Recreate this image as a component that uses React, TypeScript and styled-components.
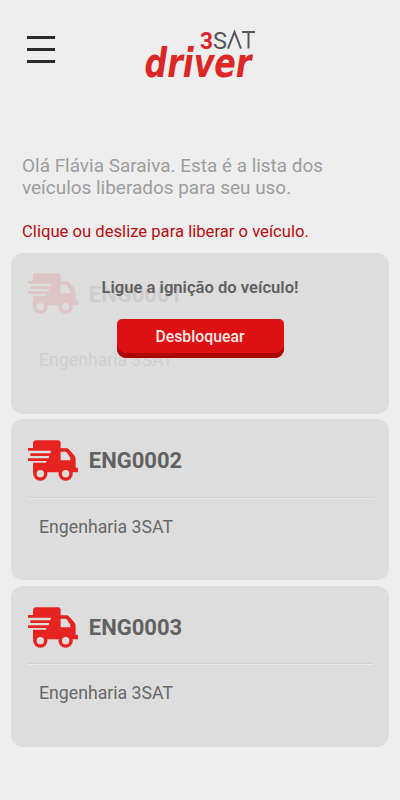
import React from "react";
import styled, { createGlobalStyle } from "styled-components";

const GlobalStyle = createGlobalStyle`
  * { box-sizing: border-box; }
  body { margin: 0; background: #eeeeee; font-family: Roboto, "Liberation Sans", sans-serif; }
`;

const Screen = styled.main`
  display: flex;
  flex-direction: column;
  height: 800px;
  background: #eeeeee;
  overflow: hidden;
`;

const Header = styled.header`
  display: grid;
  grid-template-columns: 144px 114px 1fr;
  align-items: start;
  height: 155px;
  padding-top: 27px;
`;

const MenuButton = styled.button`
  display: flex;
  flex-direction: column;
  gap: 9px;
  width: 28px;
  margin: 9px 0 0 27px;
  padding: 0;
  border: 0;
  background: none;
`;

const MenuLine = styled.span`
  height: 3px;
  width: 28px;
  background: #2b292a;
`;

const LogoSvg = styled.svg`
  display: block;
  overflow: visible;
`;

const Greeting = styled.p`
  margin: 0 0 0 22px;
  font-size: 18.95px;
  line-height: 22px;
  color: #9d9d9d;
  white-space: nowrap;
`;

const Hint = styled.p`
  margin: 22px 0 0 22px;
  font-size: 16.65px;
  line-height: 22px;
  color: #b50d10;
`;

const CardList = styled.section`
  display: flex;
  flex-direction: column;
  gap: 5.7px;
  margin: 9.6px 11px 0;
`;

const Card = styled.article`
  position: relative;
  height: 161px;
  padding: 21px 16.5px 0;
  border-radius: 12px;
  background: #dddddd;
  overflow: hidden;
`;

const CardBody = styled.div<{ $faded: boolean }>`
  opacity: ${(p) => (p.$faded ? 0.12 : 1)};
`;

const CardHead = styled.div`
  display: flex;
  align-items: center;
  height: 41px;
`;

const Plate = styled.h2`
  margin: 1px 0 0 10px;
  font-size: 22px;
  line-height: 26px;
  font-weight: 700;
  color: #616161;
`;

const Divider = styled.hr<{ $hidden: boolean }>`
  height: 2px;
  margin: 15.5px 0 0;
  border: 0;
  border-top: 1px solid #d2d2d2;
  border-bottom: 1px solid #eaeaea;
  visibility: ${(p) => (p.$hidden ? "hidden" : "visible")};
`;

const Company = styled.p`
  margin: 17px 0 0 11.5px;
  font-size: 17.7px;
  line-height: 22px;
  color: #686868;
`;

const UnlockOverlay = styled.div`
  position: absolute;
  inset: 0;
  display: flex;
  flex-direction: column;
  align-items: center;
  padding-top: 25px;
`;

const UnlockText = styled.p`
  margin: 0;
  font-size: 16.6px;
  line-height: 20px;
  font-weight: 600;
  color: #616161;
`;

const UnlockButton = styled.button`
  width: 167px;
  height: 39px;
  margin-top: 21.5px;
  padding: 0 0 4px;
  border: 0;
  border-radius: 5px 5px 9px 9px;
  background: #dd1111;
  box-shadow: inset 0 -5px 0 #aa0608;
  color: #fbe9e9;
  font: 500 15.8px/20px Roboto, sans-serif;
`;

function Logo() {
  return (
    <LogoSvg width="114" height="56" viewBox="144 27 114 56" role="img" aria-label="3SAT driver">
      <text x="200" y="48.6" fontFamily="Roboto" fontSize="24.4" fontWeight="700" fill="#d8232a" textLength="13" lengthAdjust="spacingAndGlyphs">3</text>
      <text x="213" y="48.6" fontFamily="Roboto" fontSize="24.4" fill="#55565a" textLength="14" lengthAdjust="spacingAndGlyphs">S</text>
      <path d="M228 48.6 L234.5 32 L241 48.6 M242 32 H255 M248.5 32 V48.6" fill="none" stroke="#55565a" strokeWidth="2" />
      <text x="144.5" y="77" fontFamily="DejaVu Sans" fontSize="40" fontWeight="700" fontStyle="italic" fill="#dc2727" textLength="107" lengthAdjust="spacingAndGlyphs">driver</text>
    </LogoSvg>
  );
}

function Truck() {
  return (
    <svg width="51.3" height="41.3" viewBox="83 76 154 124" aria-hidden="true">
      <path
        fill="#e52421"
        d="M108 77H173Q181 77 181 86V101H198Q203 101 207 105L223 123Q226 127 226 132V159H233V173H98V144H137L139 139H83V131H145L147 124H90V116H150L152 108H83V100H98V87Q98 77 108 77Z"
      />
      <path fill="#dddddd" d="M181 111H195Q198 111 200 114L210 129V137H181Z" />
      <circle cx="120" cy="177" r="21.5" fill="#e52421" />
      <circle cx="120" cy="177" r="11" fill="#dddddd" />
      <circle cx="196" cy="177" r="21.5" fill="#e52421" />
      <circle cx="196" cy="177" r="11" fill="#dddddd" />
    </svg>
  );
}

interface Vehicle {
  plate: string;
  company: string;
  unlocking?: boolean;
}

const vehicles: Vehicle[] = [
  { plate: "ENG0001", company: "Engenharia 3SAT", unlocking: true },
  { plate: "ENG0002", company: "Engenharia 3SAT" },
  { plate: "ENG0003", company: "Engenharia 3SAT" },
];

function VehicleCard({ plate, company, unlocking = false }: Vehicle) {
  return (
    <Card>
      <CardBody $faded={unlocking}>
        <CardHead>
          <Truck />
          <Plate>{plate}</Plate>
        </CardHead>
        <Divider $hidden={unlocking} />
        <Company>{company}</Company>
      </CardBody>
      {unlocking && (
        <UnlockOverlay>
          <UnlockText>Ligue a ignição do veículo!</UnlockText>
          <UnlockButton>Desbloquear</UnlockButton>
        </UnlockOverlay>
      )}
    </Card>
  );
}

export default function App() {
  return (
    <Screen>
      <GlobalStyle />
      <Header>
        <MenuButton aria-label="Menu">
          <MenuLine />
          <MenuLine />
          <MenuLine />
        </MenuButton>
        <Logo />
      </Header>
      <Greeting>
        Olá Flávia Saraiva. Esta é a lista dos
        <br />
        veículos liberados para seu uso.
      </Greeting>
      <Hint>Clique ou deslize para liberar o veículo.</Hint>
      <CardList>
        {vehicles.map((v) => (
          <VehicleCard key={v.plate} {...v} />
        ))}
      </CardList>
    </Screen>
  );
}
